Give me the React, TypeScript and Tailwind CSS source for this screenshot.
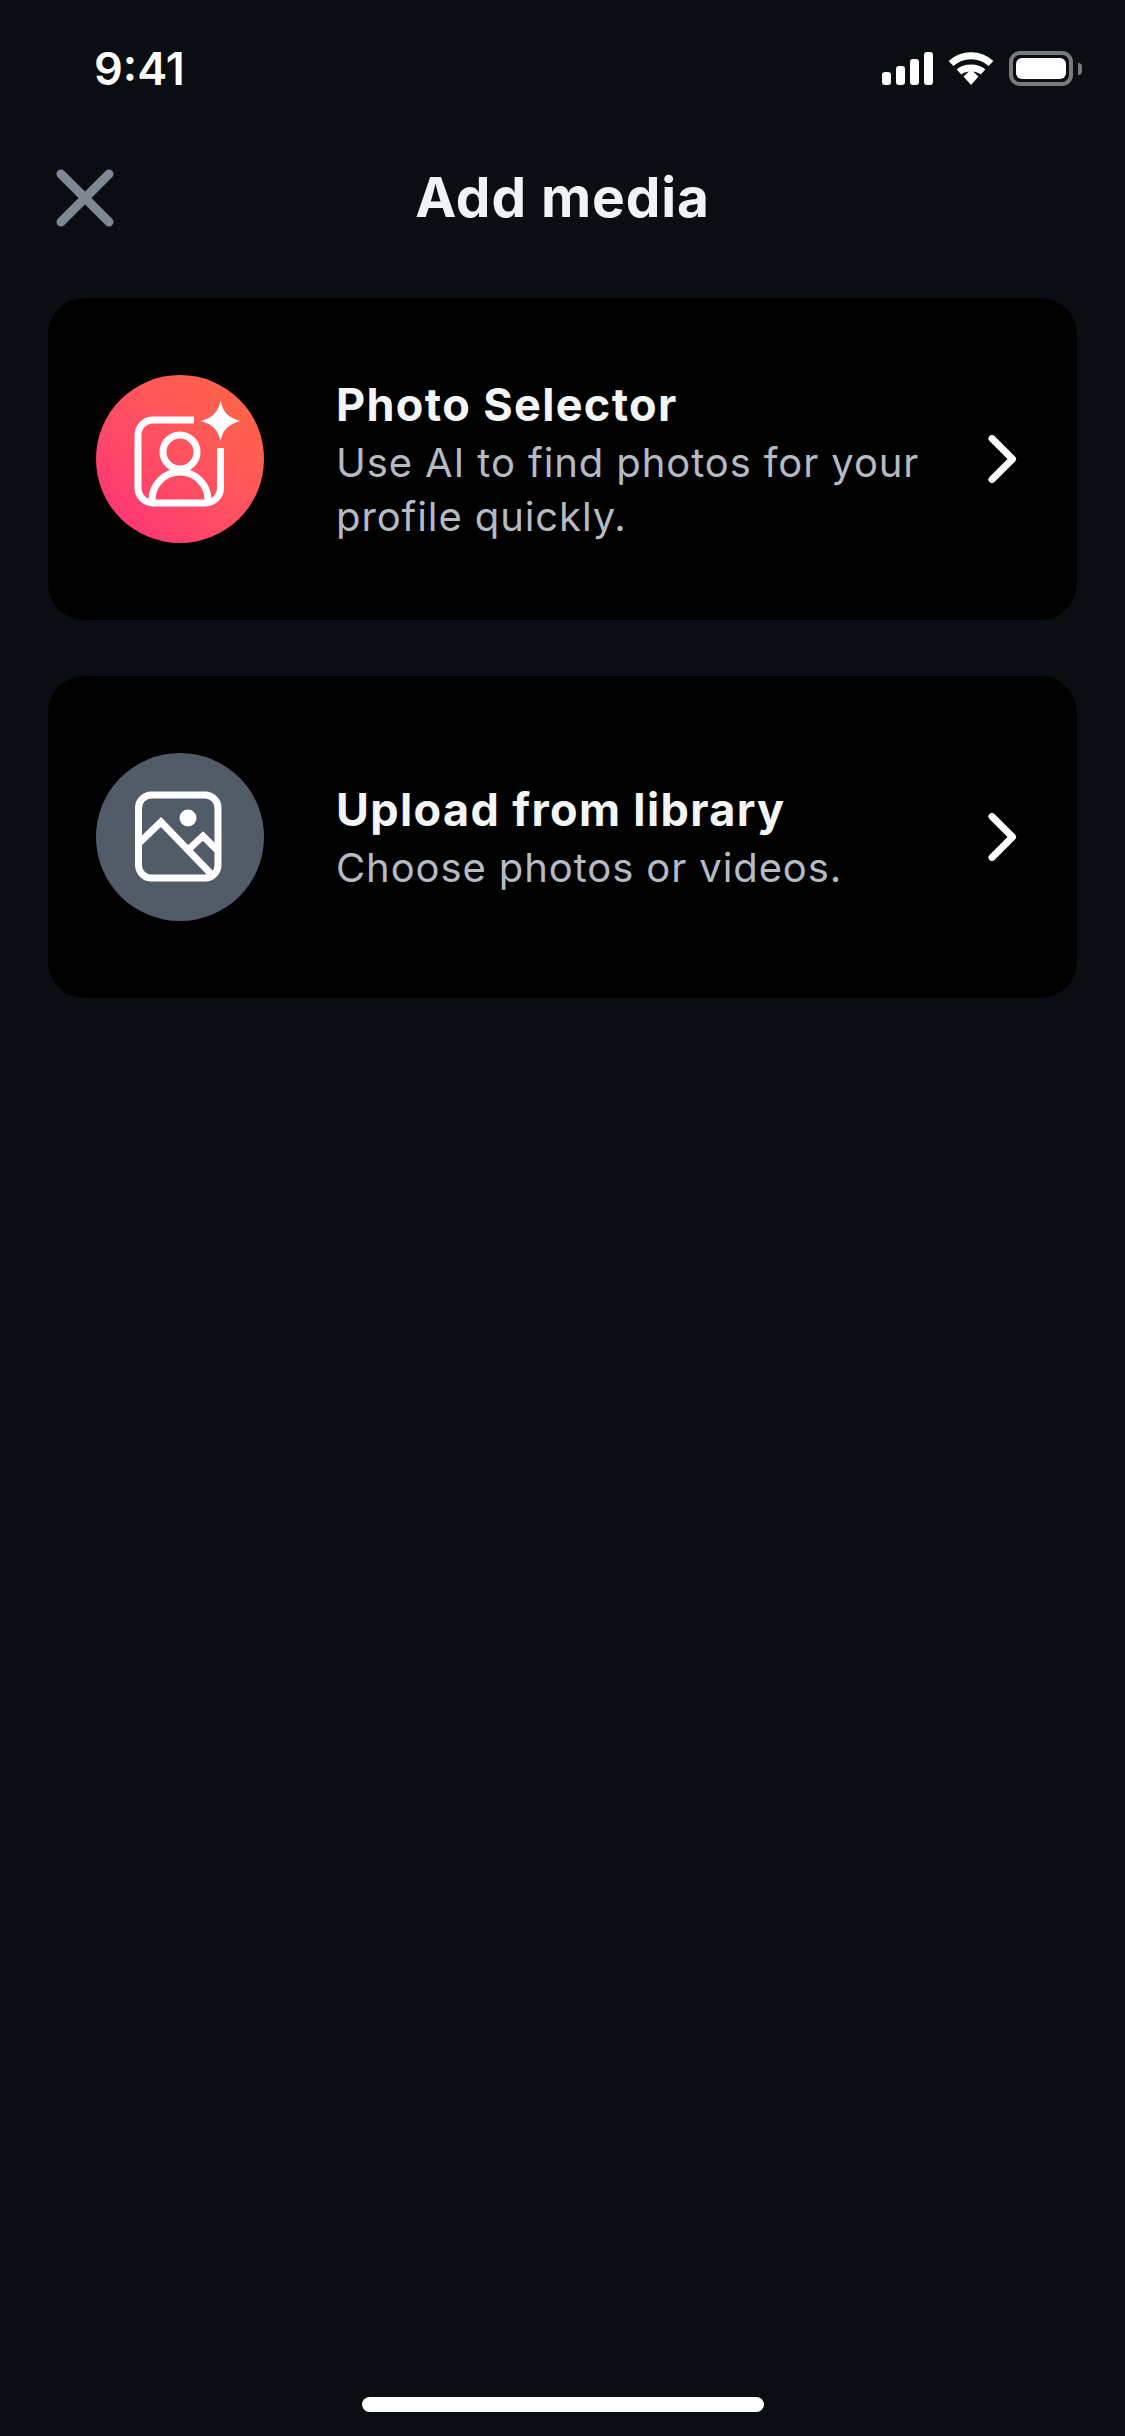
import type { ReactNode } from "react";

const font = { fontFamily: "Inter, sans-serif" };

function StatusBar() {
  return (
    <div className="flex h-[136px] items-center justify-between pl-[94px] pr-[43px] pt-[1px]">
      <span className="text-[45px] leading-none font-semibold text-white">9:41</span>
      <div className="flex items-center">
        <svg width="51" height="33" viewBox="0 0 51 33" fill="#fff">
          <rect x="0" y="20" width="9" height="13" rx="3" />
          <rect x="14" y="14" width="9" height="19" rx="3" />
          <rect x="28" y="7" width="9" height="26" rx="3" />
          <rect x="42" y="0" width="9" height="33" rx="3" />
        </svg>
        <svg className="ml-[15px]" width="46" height="35" viewBox="0 0 46 35" fill="none" stroke="#fff" strokeWidth="7">
          <path d="M3 12.5 C14 2 32 2 43 12.5" />
          <path d="M11 21 C17 15.5 29 15.5 35 21" />
          <path d="M15.5 25.5 L23 18.5 L30.5 25.5 L23 34 Z" fill="#fff" stroke="none" />
        </svg>
        <div className="ml-[15px] flex items-center">
          <div className="flex h-[35px] w-[64px] rounded-[11px] border-[4px] border-[#7a7a7c] p-[3px]">
            <div className="flex-1 rounded-[6px] bg-white" />
          </div>
          <div className="ml-[5px] h-[12px] w-[4px] rounded-r-full bg-[#7a7a7c]" />
        </div>
      </div>
    </div>
  );
}

function Header() {
  return (
    <div className="relative flex h-[122px] items-center justify-center">
      <button className="absolute left-[56px] top-[33px]">
        <svg className="block" width="58" height="58" viewBox="0 0 58 58" fill="none" stroke="#7f8793" strokeWidth="9" strokeLinecap="round">
          <path d="M5 5 L53 53 M53 5 L5 53" />
        </svg>
      </button>
      <h1 className="text-[55px] leading-none font-bold text-[#f1f2f5] tracking-[0.9px]">Add media</h1>
    </div>
  );
}

function MediaCard({ icon, title, lines }: { icon: ReactNode; title: string; lines: string[] }) {
  return (
    <div className="flex h-[322px] items-center rounded-[36px] bg-black pl-[48px] pr-[59px]">
      {icon}
      <div className="ml-[72px] flex-1">
        <div className="text-[45px] leading-[62px] font-bold text-[#f4f5f7] tracking-[1.35px]">{title}</div>
        {lines.map((l) => (
          <div key={l} className="text-[40px] leading-[54px] text-[#b6bac3] tracking-[0.9px]">{l}</div>
        ))}
      </div>
      <svg width="30" height="48" viewBox="0 0 30 48" fill="none" stroke="#fff" strokeWidth="7" strokeLinecap="round" strokeLinejoin="round">
        <path d="M4 3.5 L24.5 24 L4 44.5" />
      </svg>
    </div>
  );
}

function PhotoSelectorIcon() {
  return (
    <div className="h-[168px] w-[168px] shrink-0 rounded-full bg-gradient-to-tr from-[#ff2a7a] to-[#ff6a3c]">
      <svg width="168" height="168" viewBox="0 0 168 168" fill="none" stroke="#fff" strokeWidth="7">
        <path d="M98 45 H57 a15 15 0 0 0 -15 15 V113 a15 15 0 0 0 15 15 H109.5 a15 15 0 0 0 15 -15 V73" />
        <circle cx="84" cy="77" r="17" />
        <path d="M56 128 V125 a28 28 0 0 1 56 0 V128" />
        <path d="M124.5 26 C127 37 132 42.5 144 46 C132 49.5 127 55 124.5 66 C122 55 117 49.5 105 46 C117 42.5 122 37 124.5 26 Z" fill="#fff" stroke="none" />
      </svg>
    </div>
  );
}

function LibraryIcon() {
  return (
    <div className="h-[168px] w-[168px] shrink-0 rounded-full bg-[#525c69]">
      <svg width="168" height="168" viewBox="0 0 168 168" fill="none" stroke="#fff" strokeWidth="7">
        <clipPath id="frame">
          <rect x="42" y="42" width="80" height="83" rx="13" />
        </clipPath>
        <circle cx="92" cy="65" r="8.5" fill="#fff" stroke="none" />
        <g clipPath="url(#frame)">
          <path d="M40 93 L65 69 L117 123" />
          <path d="M93 96 L107 83 L124 100" />
        </g>
        <rect x="42.5" y="42" width="79.5" height="83" rx="13" />
      </svg>
    </div>
  );
}

export default function App() {
  return (
    <div className="flex min-h-[2436px] flex-col bg-[#0a0d12]" style={font}>
      <StatusBar />
      <Header />
      <div className="mt-[40px] flex flex-col gap-[56px] px-[48px]">
        <MediaCard
          icon={<PhotoSelectorIcon />}
          title="Photo Selector"
          lines={["Use AI to find photos for your", "profile quickly."]}
        />
        <MediaCard icon={<LibraryIcon />} title="Upload from library" lines={["Choose photos or videos."]} />
      </div>
      <div className="mt-auto mb-[24px] h-[15px] w-[402px] self-center rounded-full bg-white" />
    </div>
  );
}
